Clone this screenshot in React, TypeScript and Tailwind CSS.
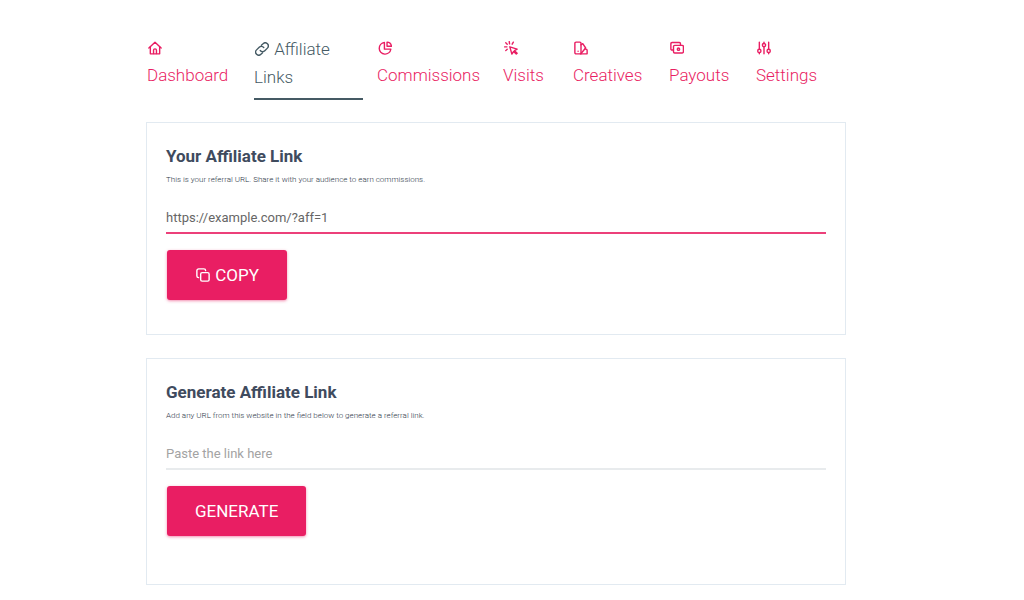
import clsx from 'clsx';
import React, { useState } from 'react';

interface IconProps {
  children: React.ReactNode;
}

const Icon: React.FC<IconProps> = ({ children }) => (
  <svg
    viewBox="0 0 24 24"
    fill="none"
    stroke="currentColor"
    strokeWidth={2.4}
    strokeLinecap="round"
    strokeLinejoin="round"
    aria-hidden="true"
    className="inline-block size-[14px] mx-px -mt-1"
  >
    {children}
  </svg>
);

const tabs = [
  {
    label: 'Dashboard',
    width: 'w-[93px]',
    icon: (
      <>
        <path d="M1.5 12 12 2 22.5 12" />
        <path d="M4 10v12h16V10" />
        <path d="M9.5 21.5V16a2.5 2.5 0 0 1 5 0v5.5" />
      </>
    ),
  },
  {
    label: 'Affiliate Links',
    width: 'w-[109px]',
    active: true,
    icon: (
      <>
        <path d="M9 14.500a5.200 5.200 0 0 0 7.800.5l4.500-4.500a5.200 5.200 0 0 0-7.500-7.500L11 5.500" />
        <path d="M15 9.500a5.200 5.200 0 0 0-7.800-.5l-4.500 4.500a5.200 5.200 0 0 0 7.500 7.500l2.800-2.500" />
      </>
    ),
  },
  {
    label: 'Commissions',
    width: 'w-[112px]',
    icon: (
      <>
        <path d="M11 2.500a10 10 0 1 0 11 11.500H11Z" />
        <path d="M15.500 2v7H23A8 8 0 0 0 15.500 2Z" />
      </>
    ),
  },
  {
    label: 'Visits',
    width: 'w-[56px]',
    icon: (
      <>
        <path d="m10 10 3.500 12.500 3-4.500 4.500 4.500 1.500-1.500-4.500-4.500 4.500-2.500Z" />
        <path d="M9 1 9.500 5M3 3l2.500 2.500M1 10H5M5.500 14 3 16.500M16 2 14 5.500" />
      </>
    ),
  },
  {
    label: 'Creatives',
    width: 'w-[82px]',
    icon: (
      <>
        <path d="M3.500 2H10a2 2 0 0 1 2 2v18H3.500a2 2 0 0 1-2-2V4a2 2 0 0 1 2-2Z" />
        <path d="m12 6.500 3-2 5 7.500L12 21.500" />
        <path d="M18.500 14h2a2 2 0 0 1 2 2v6H11" />
        <path d="M7 17.500v.01" />
      </>
    ),
  },
  {
    label: 'Payouts',
    width: 'w-[73px]',
    icon: (
      <>
        <path d="M5.500 15.500H3.500a2 2 0 0 1-2-2v-9a2 2 0 0 1 2-2H16a2 2 0 0 1 2 2v3" />
        <rect x="6" y="7.500" width="17" height="13" rx="2" />
        <circle cx="14.500" cy="14" r="2" />
      </>
    ),
  },
  {
    label: 'Settings',
    width: 'w-[64px]',
    icon: (
      <>
        <path d="M4 2v12M4 20v2M12 2v2M12 10v12M20 2v12M20 20v2" />
        <circle cx="4" cy="17" r="2.800" />
        <circle cx="12" cy="7" r="2.800" />
        <circle cx="20" cy="17" r="2.800" />
      </>
    ),
  },
];

const buttonClass =
  'ml-px h-[50px] px-7 rounded-[3px] bg-[#e91e63] text-white text-[17px] leading-6 uppercase shadow-[0_1px_3px_rgba(233,30,99,0.5)] hover:bg-[#d81b60]';

const inputClass =
  'block w-full h-9 mt-[10px] mb-4 pt-1 text-[13px] text-[#666] placeholder:text-[#a3a3a3] border-b-2 outline-none';

interface CardProps {
  id: string;
  title: string;
  description: string;
  className: string;
  children: React.ReactNode;
}

const Card: React.FC<CardProps> = ({
  id,
  title,
  description,
  className,
  children,
}) => (
  <section
    className={clsx('border border-[#e2eaf1] px-[19px] pt-[21px]', className)}
  >
    <h2 className="text-[17px] leading-6 font-bold text-[#3f4b5e]">
      <label htmlFor={id}>{title}</label>
    </h2>
    <p className="mt-1 text-[8px] leading-4 font-light text-[#2d3748]">
      {description}
    </p>
    {children}
  </section>
);

const App: React.FC = () => {
  const [url, setUrl] = useState('');
  const affiliateUrl = 'https://example.com/?aff=1';

  return (
    <div className="pt-[35px] pb-4 pl-[146px] pr-[178px] bg-white font-['Roboto',sans-serif]">
      <nav className="flex items-start gap-[14px] pl-px">
        {tabs.map((tab) => (
          <a
            key={tab.label}
            href="#"
            aria-current={tab.active ? 'page' : undefined}
            className={clsx(
              'block h-[65px] shrink-0 text-[17px] font-light border-b-2',
              tab.width,
              tab.active
                ? 'leading-7 border-[#455a64] text-[#455a64]'
                : 'leading-[27px] border-transparent text-[#e91e63]'
            )}
          >
            <Icon>{tab.icon}</Icon> {tab.label}
          </a>
        ))}
      </nav>

      <main className="mt-[22px] space-y-[23px]">
        <Card
          id="affiliate-link"
          title="Your Affiliate Link"
          description="This is your referral URL. Share it with your audience to earn commissions."
          className="pb-[34px]"
        >
          <input
            id="affiliate-link"
            type="text"
            readOnly
            value={affiliateUrl}
            className={clsx(inputClass, 'border-[#ec407a]')}
          />
          <button
            type="button"
            className={buttonClass}
            onClick={() => navigator.clipboard.writeText(affiliateUrl)}
          >
            <Icon>
              <rect x="8" y="8" width="14.500" height="14.500" rx="2.500" />
              <path d="M4.500 16.500a3 3 0 0 1-3-3v-9a3 3 0 0 1 3-3h9a3 3 0 0 1 3 3" />
            </Icon>{' '}
            Copy
          </button>
        </Card>

        <Card
          id="page-url"
          title="Generate Affiliate Link"
          description="Add any URL from this website in the field below to generate a referral link."
          className="pb-12"
        >
          <input
            id="page-url"
            type="text"
            placeholder="Paste the link here"
            value={url}
            onChange={(e) => setUrl(e.target.value)}
            className={clsx(inputClass, 'border-[#e8ebed]')}
          />
          <button type="button" className={buttonClass}>
            Generate
          </button>
        </Card>
      </main>
    </div>
  );
};

export default App;
